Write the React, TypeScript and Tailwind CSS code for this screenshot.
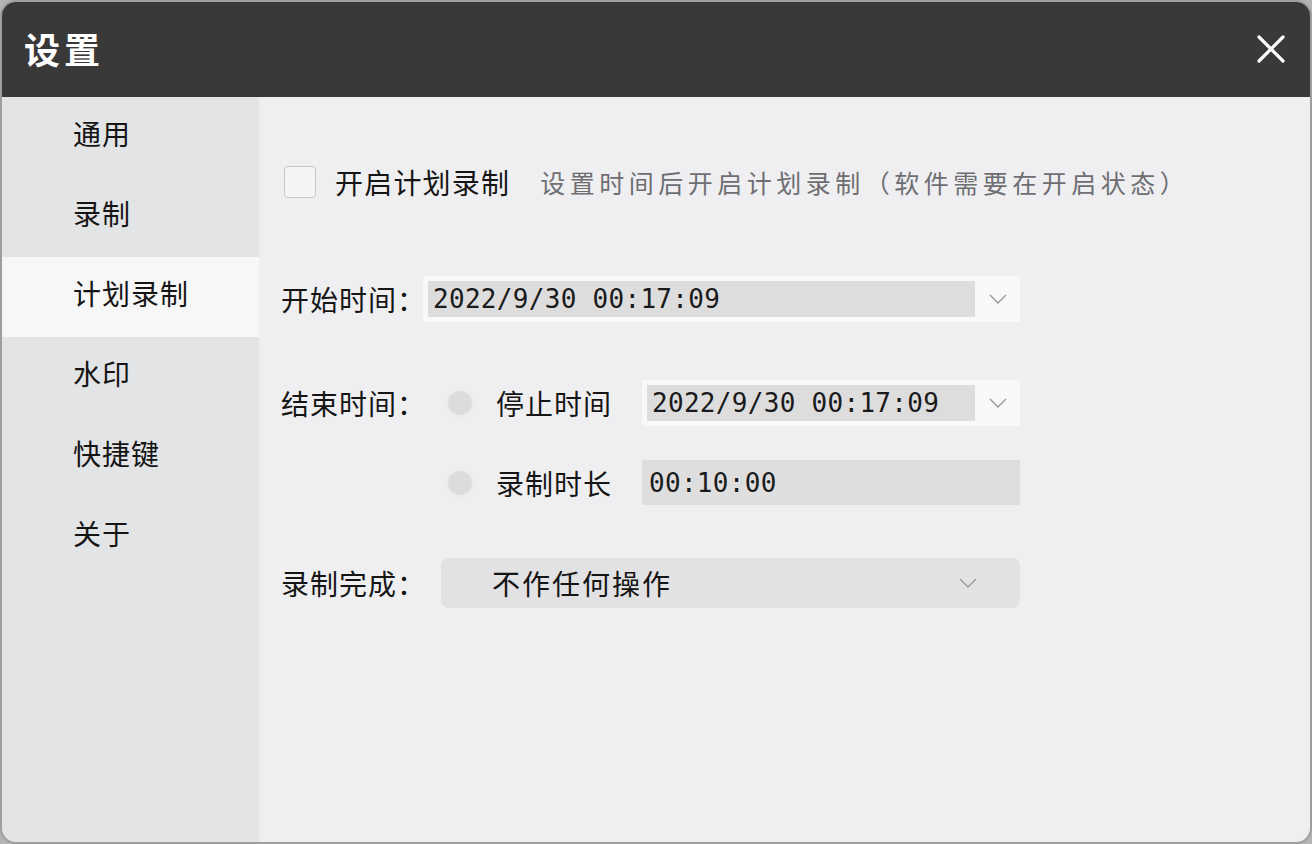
import React from "react";

const cjk = { fontFamily: '"Noto Sans CJK SC", "Noto Sans", sans-serif' };
const mono = { fontFamily: '"DejaVu Sans Mono", "Liberation Mono", monospace' };

function Chevron({ className = "" }: { className?: string }) {
  return (
    <svg width="20" height="12" viewBox="0 0 20 12" className={className}>
      <path d="M2 2 L10 10 L18 2" fill="none" stroke="#9a9a9a" strokeWidth="1.4" />
    </svg>
  );
}

function Radio() {
  return <div className="w-[30px] h-[30px] rounded-full bg-[#dcdcdd] border-[3px] border-[#ececed] shrink-0" />;
}

function DateField({ value, w }: { value: string; w: string }) {
  return (
    <div className={`flex items-center h-[46px] bg-[#f8f8f9] py-[5px] pl-[5px] rounded-[2px] shrink-0 ${w}`}>
      <div className="flex-1 h-full bg-[#dddddd] flex items-center pl-[5px]">
        <span style={mono} className="text-[26px] text-[#1a1a1a] tracking-[0.3px] leading-none">{value}</span>
      </div>
      <div className="w-[45px] flex items-center justify-center">
        <Chevron />
      </div>
    </div>
  );
}

export default function App() {
  const items = ["通用", "录制", "计划录制", "水印", "快捷键", "关于"];
  const label = "text-[28px] tracking-[1px] leading-none whitespace-nowrap shrink-0";
  return (
    <div className="w-[1312px] h-[844px] bg-[#b4b4b4]" style={cjk}>
      <div className="w-full h-full border-2 border-[#9e9e9e] rounded-[16px] overflow-hidden flex flex-col">
        <div className="h-[95px] bg-[#393939] flex items-center justify-between pl-[22px] pr-[24px] shrink-0">
          <span className="text-white text-[36px] font-bold tracking-[4px] leading-none mt-[-3px]">设置</span>
          <svg width="30" height="30" viewBox="0 0 30 30" className="mt-[-2px]">
            <path d="M3 3 L27 27 M27 3 L3 27" stroke="white" strokeWidth="3.2" strokeLinecap="round" />
          </svg>
        </div>
        <div className="flex flex-1">
          <div className="w-[257px] bg-[#e3e4e6] flex flex-col shrink-0">
            {items.map((t) => (
              <div
                key={t}
                className={`h-[80px] flex items-center pl-[71px] pb-[8px] text-[28px] tracking-[1px] text-[#151515] ${
                  t === "计划录制" ? "bg-[#f7f7f8]" : ""
                }`}
              >
                {t}
              </div>
            ))}
          </div>
          <div className="flex-1 bg-[#efeff1] flex flex-col pl-[22px] text-[#151515]">
            <div className="flex items-center h-[46px] mt-[62px] whitespace-nowrap">
              <div className="w-[32px] h-[32px] ml-[3px] border border-[#c6c6c6] bg-[#f4f4f5] rounded-[4px] shrink-0" />
              <span className="ml-[19px] text-[28px] tracking-[1.2px] leading-none">开启计划录制</span>
              <span className="ml-[30px] text-[25px] tracking-[4.5px] text-[#6e6e72] leading-none">
                设置时间后开启计划录制（软件需要在开启状态）
              </span>
            </div>

            <div className="flex items-center mt-[71px]">
              <span className={`w-[142px] ${label}`}>开始时间：</span>
              <DateField value="2022/9/30 00:17:09" w="w-[597px]" />
            </div>

            <div className="flex items-center mt-[58px]">
              <span className={`w-[164px] ${label}`}>结束时间：</span>
              <Radio />
              <span className={`ml-[21px] w-[146px] ${label}`}>停止时间</span>
              <DateField value="2022/9/30 00:17:09" w="w-[378px]" />
            </div>

            <div className="flex items-center mt-[34px]">
              <div className="w-[164px] shrink-0" />
              <Radio />
              <span className={`ml-[21px] w-[146px] ${label}`}>录制时长</span>
              <div className="w-[378px] h-[45px] bg-[#dedede] flex items-center pl-[7px] shrink-0">
                <span style={mono} className="text-[26px] text-[#1a1a1a] tracking-[0.3px] leading-none">00:10:00</span>
              </div>
            </div>

            <div className="flex items-center mt-[53px]">
              <span className={`w-[160px] ${label}`}>录制完成：</span>
              <div className="w-[579px] h-[50px] rounded-[8px] bg-[#e2e2e4] flex items-center justify-between pl-[51px] pr-[42px] shrink-0">
                <span className="text-[28px] tracking-[2px] leading-none">不作任何操作</span>
                <Chevron />
              </div>
            </div>
          </div>
        </div>
      </div>
    </div>
  );
}
